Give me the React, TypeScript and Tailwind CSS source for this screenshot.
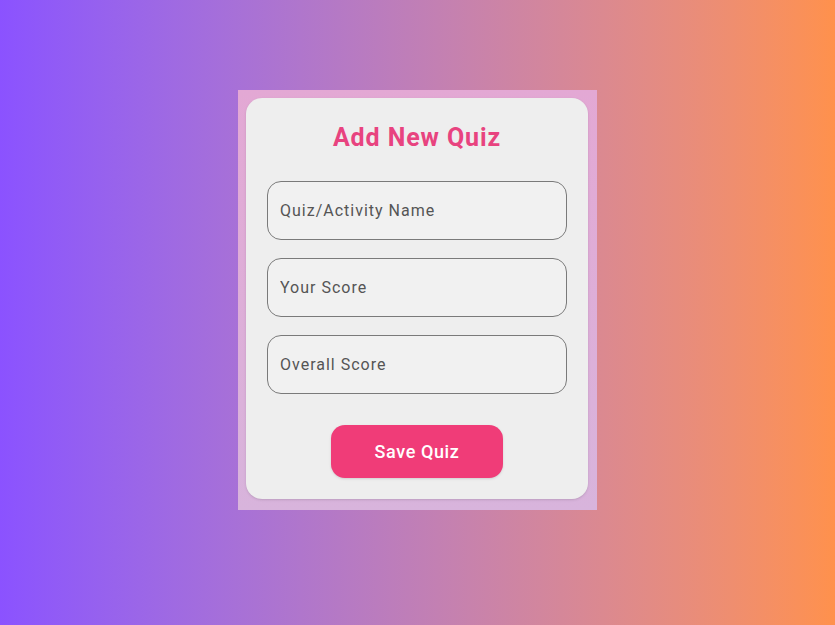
import React from 'react';

const fields = ['Quiz/Activity Name', 'Your Score', 'Overall Score'];

const App: React.FC = () => {
  return (
    <div
      className="w-[835px] h-[625px] flex justify-center pt-[90px] bg-gradient-to-r from-[#8b52ff] to-[#ff914c]"
      style={{ fontFamily: 'Roboto, "Noto Sans", sans-serif' }}
    >
      {/* Dialog backdrop */}
      <div className="w-[359px] h-[420px] pt-2 pl-2 pr-[9px] pb-[11px] bg-gradient-to-b from-[#e3a8d4] to-[#d8b4dc]">
        <div className="h-full rounded-[16px] bg-[#eeeeee] shadow-sm px-[21px] pt-[22px] flex flex-col">
          <h1 className="text-center text-[25px] font-bold tracking-[0.9px] text-[#e8437f] leading-[36px]">Add New Quiz</h1>

          <div className="mt-[25px] flex flex-col gap-[18px]">
            {fields.map((f) => (
              <input
                key={f}
                placeholder={f}
                className="h-[59px] w-full rounded-[14px] border border-[#7a7a7a] bg-[#f1f1f1] px-[12px] text-[16px] tracking-[1px] text-[#444] placeholder:text-[#555] outline-none"
              />
            ))}
          </div>

          <div className="mt-[31px] flex justify-center">
            <button className="w-[172px] h-[53px] rounded-[14px] bg-[#f03c78] text-white text-[18px] font-medium tracking-[0.6px] shadow-sm">
              Save Quiz
            </button>
          </div>
        </div>
      </div>
    </div>
  );
};

export default App;
